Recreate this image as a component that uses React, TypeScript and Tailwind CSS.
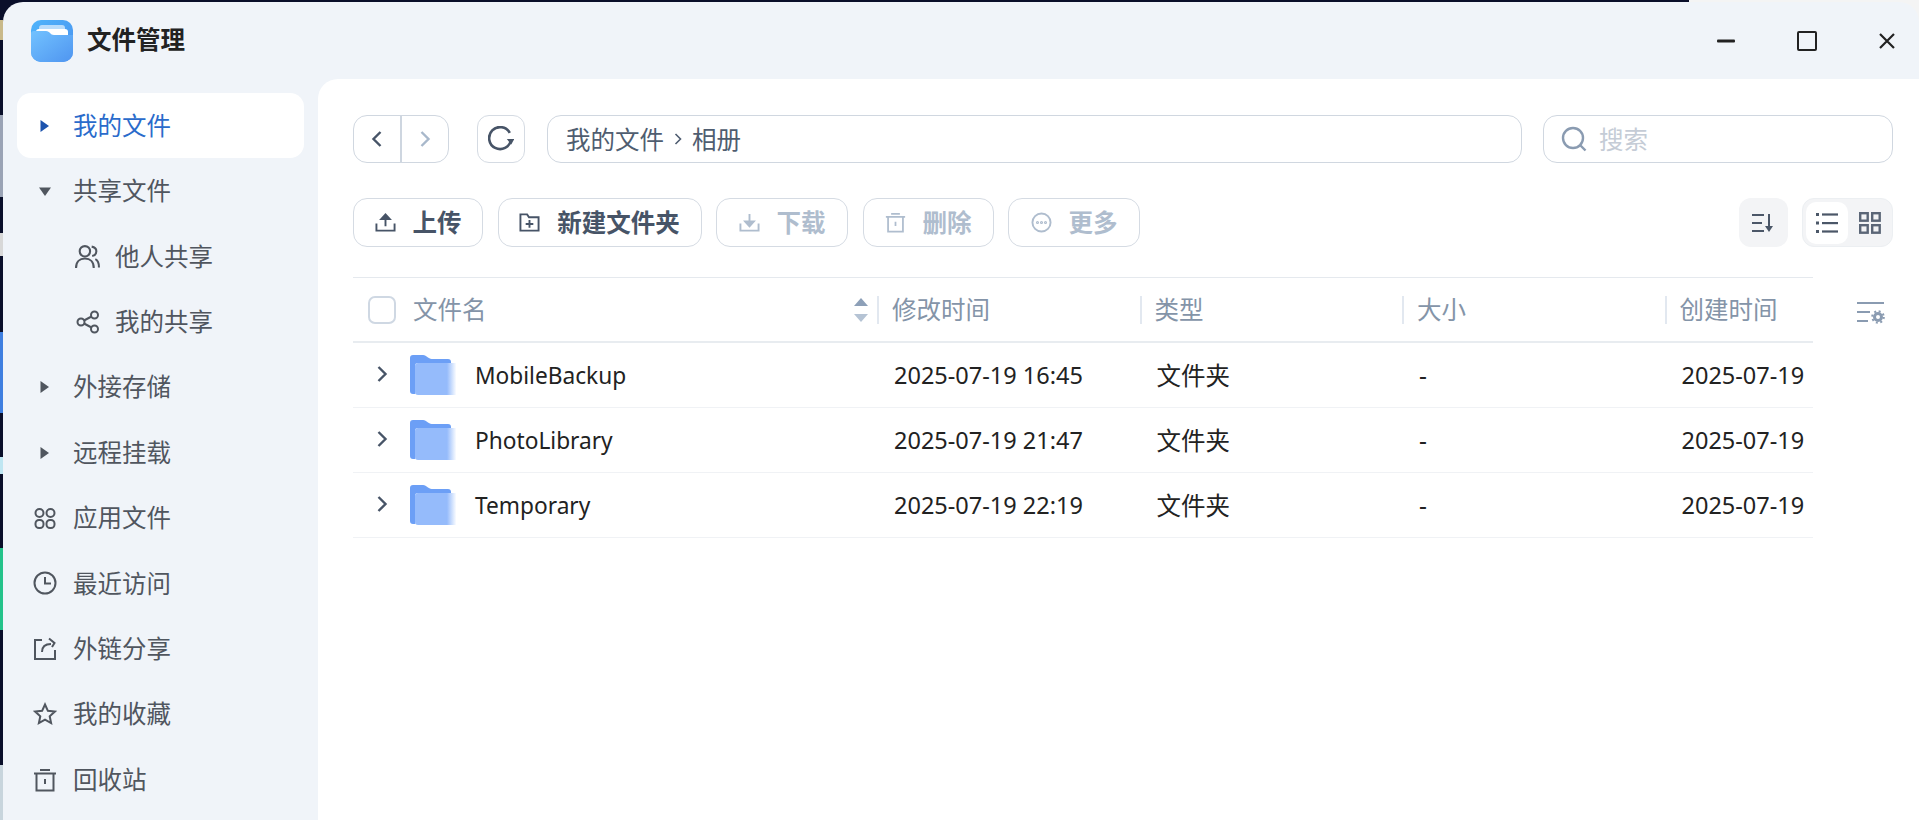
import type { ReactNode } from 'react';

const FONT = "font-['Noto_Sans','Noto_Sans_CJK_SC',sans-serif]";

const Svg = ({ children, size = 24, className = '' }: { children: ReactNode; size?: number; className?: string }) => (
  <svg width={size} height={size} viewBox="0 0 24 24" fill="none" stroke="currentColor" strokeWidth="2" className={className}>
    {children}
  </svg>
);

const Logo = () => (
  <svg width="42" height="42" viewBox="0 0 42 42">
    <defs>
      <linearGradient id="logoBack" x1="0" y1="0" x2="1" y2="1">
        <stop offset="0" stopColor="#4fb4fb" />
        <stop offset="1" stopColor="#4a90ee" />
      </linearGradient>
      <linearGradient id="logoFront" x1="0" y1="0" x2="1" y2="1">
        <stop offset="0" stopColor="#72c2ff" />
        <stop offset="1" stopColor="#4f95f0" />
      </linearGradient>
    </defs>
    <rect width="42" height="42" rx="10" fill="url(#logoBack)" />
    <path d="M8 8a3 3 0 0 1 3-3h20a3 3 0 0 1 3 3v6H8z" fill="#b9dcfb" />
    <path d="M5 12a3 3 0 0 1 3-3h26a3 3 0 0 1 3 3v6H5z" fill="#ffffff" />
    <path d="M0 14a3 3 0 0 1 3-3h12c2 0 3 1 4 2s2 2 4 2h19v17a10 10 0 0 1-10 10H10A10 10 0 0 1 0 32z" fill="url(#logoFront)" />
  </svg>
);

const FolderIcon = ({ id }: { id: string }) => (
  <svg width="46" height="40" viewBox="0 0 46 40" className="shrink-0">
    <defs>
      <linearGradient id={id} x1="0" y1="0" x2="1" y2="0">
        <stop offset="0" stopColor="#95bbfb" />
        <stop offset="0.78" stopColor="#95bbfb" />
        <stop offset="1" stopColor="#95bbfb" stopOpacity="0.05" />
      </linearGradient>
    </defs>
    <path d="M0 3a3 3 0 0 1 3-3h10c2 0 3 1 5 2.500s3 1.500 5 1.500h15a3 3 0 0 1 3 3v29a3 3 0 0 1-3 3H3a3 3 0 0 1-3-3z" fill="#6c9ff6" />
    <rect x="5" y="8" width="41" height="32" rx="3" fill="#ffffff" />
    <path d="M5 11a3 3 0 0 1 3-3h38v32H8a3 3 0 0 1-3-3z" fill={`url(#${id})`} />
  </svg>
);

const Triangle = ({ down, className = '' }: { down?: boolean; className?: string }) => (
  <svg width="12" height="12" viewBox="0 0 12 12" className={className} fill="currentColor">
    {down ? <path d="M0 2.500h12L6 11z" /> : <path d="M1.500 0 10 6l-8.500 6z" />}
  </svg>
);

const AppsIcon = () => (
  <Svg size={25}>
    <circle cx="6.500" cy="6.500" r="4" />
    <circle cx="17.500" cy="6.500" r="4" />
    <rect x="2.500" y="13.500" width="8" height="8" rx="3.500" />
    <rect x="13.500" y="13.500" width="8" height="8" rx="3.500" />
  </Svg>
);

const ClockIcon = () => (
  <Svg>
    <circle cx="12" cy="12" r="10.500" />
    <path d="M12 6v6.500h6" />
  </Svg>
);

const LinkShareIcon = () => (
  <Svg>
    <path d="M9 3H2v19h20v-9" />
    <path d="M9 15c0-5 3-8 9-8M16 1.500 21.500 6 19 10" />
  </Svg>
);

const StarIcon = () => (
  <Svg size={26}>
    <path d="m12 2.500 2.900 6.300 6.900.8-5.100 4.700 1.400 6.800L12 17.600l-6.100 3.500 1.400-6.800-5.100-4.700 6.900-.8z" />
  </Svg>
);

const TrashIcon = ({ size = 24 }: { size?: number }) => (
  <Svg size={size}>
    <path d="M1 5.500h22M7 2h10M3.500 5.500v17h17v-17M12 11v5" />
  </Svg>
);

const UsersIcon = () => (
  <Svg size={25}>
    <circle cx="9.500" cy="7" r="5" />
    <path d="M1 23c0-6 3.500-9 8.500-9s8.500 3 8.500 9M16 2.500c3 .5 4.500 2.500 4.500 4.500s-1.500 4-4 4.500M19.500 14.500c2.500 1 3.500 4 3.500 8" />
  </Svg>
);

const ShareIcon = () => (
  <Svg>
    <circle cx="5" cy="12" r="3.500" />
    <circle cx="18.500" cy="5" r="3.500" />
    <circle cx="18.500" cy="19" r="3.500" />
    <path d="m8 10.500 7.500-4M8 13.500l7.500 4" />
  </Svg>
);

const sideItems: { label: string; lead: ReactNode; active?: boolean; sub?: boolean }[] = [
  { label: '我的文件', lead: <Triangle className="text-[#1c53ad]" />, active: true },
  { label: '共享文件', lead: <Triangle down className="text-[#50565f]" /> },
  { label: '他人共享', lead: <UsersIcon />, sub: true },
  { label: '我的共享', lead: <ShareIcon />, sub: true },
  { label: '外接存储', lead: <Triangle className="text-[#50565f]" /> },
  { label: '远程挂载', lead: <Triangle className="text-[#50565f]" /> },
  { label: '应用文件', lead: <AppsIcon /> },
  { label: '最近访问', lead: <ClockIcon /> },
  { label: '外链分享', lead: <LinkShareIcon /> },
  { label: '我的收藏', lead: <StarIcon /> },
  { label: '回收站', lead: <TrashIcon /> },
];

const Sidebar = () => (
  <aside className="w-[315px] shrink-0 px-[14px] pt-[14px]">
    {sideItems.map(item => (
      <div
        key={item.label}
        className={`flex h-[65.4px] items-center rounded-[14px] text-[24.500px] ${item.active ? 'bg-white text-[#2a6bcb]' : 'text-[#50565f]'} ${item.sub ? 'pl-[58px]' : ''}`}
      >
        {item.sub ? (
          <div className="mr-[15px] flex w-[25px] justify-center">{item.lead}</div>
        ) : (
          <div className="ml-[16px] mr-[16px] flex w-[24px] justify-center">{item.lead}</div>
        )}
        <span className="pt-[1px]">{item.label}</span>
      </div>
    ))}
  </aside>
);

const ActionButton = ({ icon, label, disabled, className = '' }: { icon: ReactNode; label: string; disabled?: boolean; className?: string }) => (
  <div
    className={`flex h-[49px] items-center justify-center gap-[17px] whitespace-nowrap rounded-[14px] border border-[#d5dbe3] text-[24.500px] font-bold ${disabled ? 'text-[#afbdce]' : 'text-[#475467]'} ${className}`}
  >
    {icon}
    <span className="pt-[2px]">{label}</span>
  </div>
);

const UploadIcon = () => (
  <svg width="21" height="21" viewBox="0 0 22 22" fill="none" stroke="currentColor" strokeWidth="2">
    <path d="M1.500 12v7.500h19V12M11 15V4" />
    <path d="M6.500 7.500 11 2.500l4.500 5z" fill="currentColor" />
  </svg>
);

const NewFolderIcon = () => (
  <svg width="21" height="21" viewBox="0 0 22 22" fill="none" stroke="currentColor" strokeWidth="2">
    <path d="M1.500 2.500h7l2 3h10v14h-19zM11 8.500v8M7 12.500h8" />
  </svg>
);

const DownloadIcon = () => (
  <svg width="21" height="21" viewBox="0 0 22 22" fill="none" stroke="currentColor" strokeWidth="2">
    <path d="M1.500 12v7.500h19V12M11 2v9" />
    <path d="M6.500 10 11 15l4.500-5z" fill="currentColor" />
  </svg>
);

const MoreIcon = () => (
  <svg width="21" height="21" viewBox="0 0 22 22" fill="none" stroke="currentColor" strokeWidth="2">
    <circle cx="11" cy="11" r="9.500" />
    <circle cx="6.800" cy="11" r=".6" />
    <circle cx="11" cy="11" r=".6" />
    <circle cx="15.200" cy="11" r=".6" />
  </svg>
);

const columns = ['修改时间', '类型', '大小', '创建时间'];

const rows = [
  { name: 'MobileBackup', modified: '2025-07-19 16:45', created: '2025-07-19' },
  { name: 'PhotoLibrary', modified: '2025-07-19 21:47', created: '2025-07-19' },
  { name: 'Temporary', modified: '2025-07-19 22:19', created: '2025-07-19' },
];

const FileTable = () => (
  <div className="w-[1460px] border-t border-[#e5e9ee]">
    <div className="flex h-[65px] items-center border-b-2 border-[#e8ecf0] text-[24.500px] text-[#8494a8]">
      <div className="flex w-[524px] shrink-0 items-center">
        <div className="ml-[15px] size-[28px] rounded-[7px] border-2 border-[#cfd8e3]" />
        <span className="ml-[17px] flex-1 pt-[2px]">文件名</span>
        <svg width="14" height="24" viewBox="0 0 14 24" className="mr-[9px]">
          <path d="M7 0 14 8H0z" fill="#8da0b8" />
          <path d="M7 24 14 16H0z" fill="#b5c3d4" />
        </svg>
      </div>
      {columns.map(col => (
        <div key={col} className="flex h-[28px] w-[262.500px] items-center border-l-2 border-[#e2e8f0] pl-[13px] pt-[2px] last:w-[148px]">
          {col}
        </div>
      ))}
    </div>
    {rows.map(row => (
      <div key={row.name} className="flex h-[65px] items-center border-b border-[#f0f2f5] text-[24.500px] text-[#222]">
        <div className="flex w-[525px] shrink-0 items-center">
          <svg width="12" height="18" viewBox="0 0 12 18" fill="none" stroke="#475467" strokeWidth="2.400" className="ml-[23px] mt-[-3px]">
            <path d="m2.500 2 7 7-7 7" />
          </svg>
          <div className="ml-[22px] mt-[-1px]">
            <FolderIcon id={`folder-${row.name}`} />
          </div>
          <span className="ml-[19px] pt-[2px] text-[22.700px]">{row.name}</span>
        </div>
        <div className="w-[262.500px] pl-[16px] pt-[2px] text-[23.500px]">{row.modified}</div>
        <div className="w-[262.500px] pl-[16px] pt-[2px]">文件夹</div>
        <div className="w-[262.500px] pl-[16px] pt-[2px]">-</div>
        <div className="w-[147px] whitespace-nowrap pl-[16px] pt-[2px] text-[23.500px]">{row.created}</div>
      </div>
    ))}
  </div>
);

export default function App() {
  return (
    <div className={`flex h-[820px] w-full overflow-hidden bg-[linear-gradient(90deg,#0a0f2a_1689px,#f4f4f4_1689px)] ${FONT}`}>
      {/* desktop peeking out on the left */}
      <div className="flex w-[3px] shrink-0 flex-col">
        <div className="h-[20px]" />
        <div className="h-[20px] bg-[#c9b98a]" />
        <div className="h-[75px]" />
        <div className="h-[82px] bg-[#9aa3b5]" />
        <div className="h-[36px]" />
        <div className="h-[23px] bg-[#d8d8d8]" />
        <div className="h-[76px]" />
        <div className="h-[81px] bg-[#3f7fe0]" />
        <div className="h-[44px]" />
        <div className="h-[17px] bg-[#bfe6f2]" />
        <div className="h-[74px]" />
        <div className="h-[82px] bg-[#24c28a]" />
        <div className="h-[135px]" />
        <div className="flex-1 bg-[#c8d5dd]" />
      </div>
      <div className="flex min-w-0 flex-1 flex-col pt-[2px]">
        <div className="flex h-full flex-col rounded-t-[20px] bg-[#f0f4f9]">
          <header className="flex h-[77px] shrink-0 items-center">
            <div className="ml-[28px]">
              <Logo />
            </div>
            <h1 className="ml-[14px] text-[24.500px] font-bold text-[#222]">文件管理</h1>
            <div className="ml-auto flex items-center text-[#222]">
              <svg width="18" height="4" viewBox="0 0 18 4" className="mr-[62px]">
                <rect width="18" height="3" y=".5" rx="1" fill="currentColor" />
              </svg>
              <svg width="20" height="20" viewBox="0 0 20 20" fill="none" stroke="currentColor" strokeWidth="2" className="mr-[62px]">
                <rect x="1" y="1" width="18" height="18" rx="1" />
              </svg>
              <svg width="16" height="16" viewBox="0 0 16 16" fill="none" stroke="currentColor" strokeWidth="2.200" className="mr-[24px]">
                <path d="m1 1 14 14M15 1 1 15" />
              </svg>
            </div>
          </header>
          <div className="flex min-h-0 flex-1">
            <Sidebar />
            <main className="flex-1 rounded-tl-[20px] bg-white pl-[35px] pr-[26px] pt-[36px]">
              <div className="flex h-[48px] items-center">
                <div className="flex h-[48px] w-[96px] items-center rounded-[14px] border border-[#d0d7e0]">
                  <div className="flex h-full flex-1 items-center justify-center border-r-2 border-[#ced6e0]">
                    <svg width="12" height="18" viewBox="0 0 12 18" fill="none" stroke="#475467" strokeWidth="2.400">
                      <path d="M9.500 2 2.500 9l7 7" />
                    </svg>
                  </div>
                  <div className="flex h-full flex-1 items-center justify-center">
                    <svg width="12" height="18" viewBox="0 0 12 18" fill="none" stroke="#a8b8cb" strokeWidth="2.400">
                      <path d="m2.500 2 7 7-7 7" />
                    </svg>
                  </div>
                </div>
                <div className="ml-[28px] flex size-[48px] items-center justify-center rounded-[12px] border border-[#d5dbe3] text-[#475467]">
                  <svg width="26" height="26" viewBox="0 0 26 26" fill="none" stroke="currentColor" strokeWidth="2.600">
                    <path d="M21.800 6.800A11 11 0 1 0 23 14" />
                    <path d="M18.800 13h7.500l-3 5.500z" fill="currentColor" stroke="none" />
                  </svg>
                </div>
                <div className="ml-[22px] flex h-[48px] w-[975px] items-center gap-[9px] rounded-[14px] border border-[#d0d7e0] pl-[18px] text-[24.500px] text-[#4f5d70]">
                  <span className="pt-[2px]">我的文件</span>
                  <svg width="10" height="14" viewBox="0 0 10 14" fill="none" stroke="currentColor" strokeWidth="1.600">
                    <path d="m2.500 2 5 5-5 5" />
                  </svg>
                  <span className="pt-[2px]">相册</span>
                </div>
                <div className="ml-[21px] flex h-[48px] w-[350px] items-center rounded-[14px] border border-[#d0d7e0] pl-[17px] text-[24.500px] text-[#c5ccd6]">
                  <svg width="26" height="26" viewBox="0 0 26 26" fill="none" stroke="#8a9bb1" strokeWidth="2.400">
                    <circle cx="12" cy="12" r="10" />
                    <path d="m19 19 5.500 5.500" />
                  </svg>
                  <span className="ml-[12px] pt-[2px]">搜索</span>
                </div>
              </div>
              <div className="mt-[35px] flex h-[49px] items-center gap-[14.500px]">
                <ActionButton icon={<UploadIcon />} label="上传" className="w-[130px]" />
                <ActionButton icon={<NewFolderIcon />} label="新建文件夹" className="w-[204px]" />
                <ActionButton icon={<DownloadIcon />} label="下载" disabled className="w-[132px]" />
                <ActionButton icon={<TrashIcon size={21} />} label="删除" disabled className="w-[131px]" />
                <ActionButton icon={<MoreIcon />} label="更多" disabled className="w-[132px]" />
                <div className="ml-auto flex size-[49px] items-center justify-center rounded-[12px] bg-[#f3f4f6] text-[#4b5768]">
                  <svg width="22" height="20" viewBox="0 0 22 20" fill="none" stroke="currentColor" strokeWidth="2">
                    <path d="M0 2h12M0 10h10M0 18h12M17 1v15" />
                    <path d="m13 13 4 6 4-6z" fill="currentColor" stroke="none" />
                  </svg>
                </div>
                <div className="flex h-[49px] w-[91px] items-center rounded-[12px] border border-[#eceff2] bg-[#f3f4f6] pl-[3px]">
                  <div className="flex h-[42px] w-[42px] items-center justify-center rounded-[10px] bg-white text-[#4b5768]">
                    <svg width="22" height="20" viewBox="0 0 22 20" fill="currentColor">
                      <rect width="3" height="3" y="0" />
                      <rect width="3" height="3" y="8.500" />
                      <rect width="3" height="3" y="17" />
                      <rect x="6" width="16" height="2.200" y=".4" />
                      <rect x="6" width="16" height="2.200" y="9" />
                      <rect x="6" width="16" height="2.200" y="17.400" />
                    </svg>
                  </div>
                  <div className="flex flex-1 items-center justify-center text-[#5b6677]">
                    <svg width="22" height="22" viewBox="0 0 22 22" fill="none" stroke="currentColor" strokeWidth="2.400">
                      <rect x="1.200" y="1.200" width="7.500" height="7.500" />
                      <rect x="13.200" y="1.200" width="7.500" height="7.500" />
                      <rect x="1.200" y="13.200" width="7.500" height="7.500" />
                      <rect x="13.200" y="13.200" width="7.500" height="7.500" />
                    </svg>
                  </div>
                </div>
              </div>
              <div className="mt-[30px] flex items-start">
                <FileTable />
                <svg width="28" height="24" viewBox="0 0 28 24" fill="none" stroke="#8a9bb1" strokeWidth="2" className="ml-[44px] mt-[24px]">
                  <path d="M0 2h27M0 11h13M0 20h11" />
                  <circle cx="21" cy="16" r="3.500" strokeWidth="3" />
                  <circle cx="21" cy="16" r="5.800" strokeWidth="2" strokeDasharray="2 2.550" />
                </svg>
              </div>
            </main>
          </div>
        </div>
      </div>
    </div>
  );
}
